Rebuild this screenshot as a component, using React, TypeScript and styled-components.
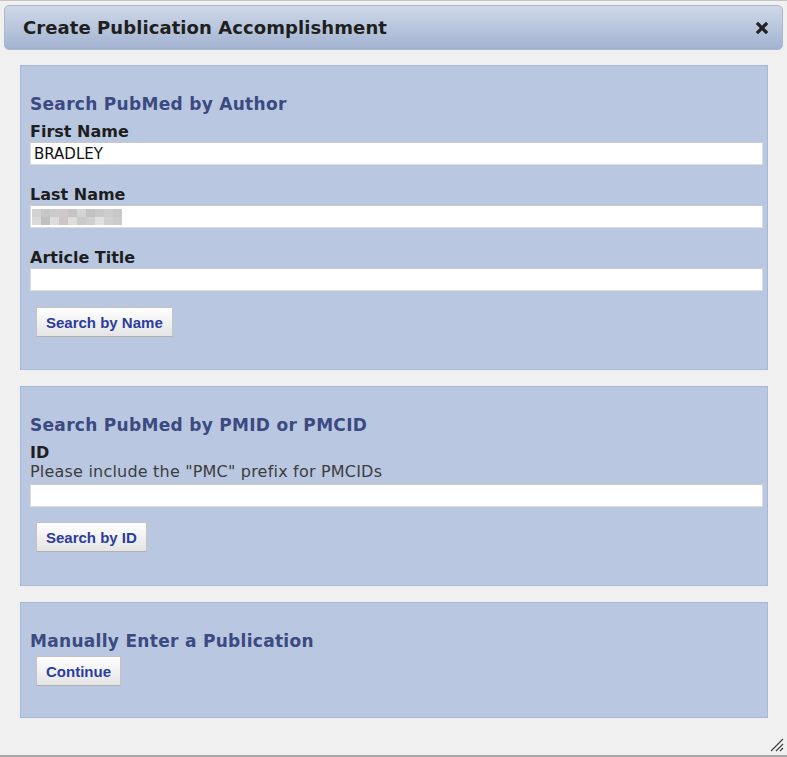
import React from "react";
import styled, { createGlobalStyle } from "styled-components";

const Global = createGlobalStyle`
  html, body { margin: 0; padding: 0; background: #f0f0f0; }
  * { box-sizing: border-box; }
`;

const Dialog = styled.div`
  position: relative;
  width: 787px;
  height: 757px;
  background: #f0f0f0;
  border-top: 1px solid #c4c4c4;
  border-bottom: 2px solid #a8a8a8;
  padding: 4px 4px 0 4px;
  font-family: "DejaVu Sans", Verdana, sans-serif;
  display: flex;
  flex-direction: column;
`;

const TitleBar = styled.div`
  height: 45px;
  border: 1px solid #aab7cd;
  border-radius: 5px;
  background: linear-gradient(#cfd8e8, #a2b3d1);
  display: flex;
  align-items: center;
  justify-content: space-between;
  padding: 0 13px 0 18px;
`;

const Title = styled.h1`
  margin: 0;
  font-size: 18px;
  font-weight: bold;
  color: #1f1f1f;
  letter-spacing: 0.08px;
`;

const Close = styled.button`
  border: none;
  background: none;
  padding: 0;
  width: 14px;
  height: 14px;
  display: flex;
  align-items: center;
  justify-content: center;
  cursor: pointer;
`;

const Body = styled.div`
  display: flex;
  flex-direction: column;
  gap: 16px;
  padding: 15px 15px 0 16px;
`;

const Section = styled.section<{ $h: number }>`
  height: ${(p) => p.$h}px;
  background: #b9c7e1;
  border: 1px solid #a6b8d8;
  padding: 28px 4px 0 9px;
  display: flex;
  flex-direction: column;
`;

const Heading = styled.h2`
  margin: 0 0 9px 0;
  font-size: 17px;
  line-height: 20px;
  font-weight: bold;
  color: #3b4a80;
  letter-spacing: 0.3px;
`;

const Label = styled.label`
  display: block;
  font-size: 16px;
  line-height: 18px;
  font-weight: bold;
  color: #1e1e1e;
  margin-bottom: 1px;
`;

const Help = styled.div`
  font-size: 16px;
  line-height: 18px;
  color: #3d3d3d;
  letter-spacing: 0.2px;
  margin-bottom: 3px;
`;

const FieldWrap = styled.div<{ $mb?: number }>`
  position: relative;
  margin-bottom: ${(p) => p.$mb ?? 21}px;
`;

const Input = styled.input`
  display: block;
  width: 100%;
  height: 23px;
  border: 1px solid #dedede;
  border-top-color: #c9c9c9;
  background: #fff;
  padding: 0 3px;
  font-family: "DejaVu Sans", Verdana, sans-serif;
  font-size: 15px;
  color: #111;
  outline: none;
`;

const Mosaic = styled.div`
  position: absolute;
  left: 2px;
  top: 4px;
  display: grid;
  grid-template-columns: repeat(10, 9px);
  grid-auto-rows: 8px;
  pointer-events: none;
`;

const Tile = styled.span<{ $c: string }>`
  background: ${(p) => p.$c};
`;

const Button = styled.button<{ $mt: number }>`
  align-self: flex-start;
  margin: ${(p) => p.$mt}px 0 0 6px;
  height: 30px;
  padding: 0 9px;
  border: 1px solid #c3c3c3;
  border-bottom-color: #b0b0b0;
  background: linear-gradient(#ffffff, #e4e4e4);
  font-family: "Liberation Sans", Arial, sans-serif;
  font-weight: bold;
  font-size: 15px;
  color: #2b3c9c;
  cursor: pointer;
`;

const Grip = styled.div`
  position: absolute;
  right: 3px;
  bottom: 4px;
  width: 14px;
  height: 14px;
`;

const mosaicColors = [
  "#d2d2d2", "#c6c6c6", "#cbcbcb", "#cfc8c8", "#c4c4c4", "#d4d4d4", "#c2c2c2", "#c9c9c9", "#cdcdcd", "#c8c8c8",
  "#dadada", "#c0c0c0", "#dcdcdc", "#c8c8c8", "#dedcd8", "#cacaca", "#d0d0d0", "#e0e0e0", "#d0d0d0", "#cccccc",
];

export default function App() {
  return (
    <>
      <Global />
      <Dialog>
        <TitleBar>
          <Title>Create Publication Accomplishment</Title>
          <Close aria-label="close">
            <svg width="12" height="12" viewBox="0 0 12 12">
              <path d="M2 2 L10 10 M10 2 L2 10" stroke="#222" strokeWidth="3.2" strokeLinecap="square" />
            </svg>
          </Close>
        </TitleBar>
        <Body>
          <Section $h={305}>
            <Heading>Search PubMed by Author</Heading>
            <Label>First Name</Label>
            <FieldWrap>
              <Input defaultValue="BRADLEY" />
            </FieldWrap>
            <Label>Last Name</Label>
            <FieldWrap>
              <Input defaultValue="" />
              <Mosaic>
                {mosaicColors.map((c, i) => (
                  <Tile key={i} $c={c} />
                ))}
              </Mosaic>
            </FieldWrap>
            <Label>Article Title</Label>
            <FieldWrap $mb={0}>
              <Input />
            </FieldWrap>
            <Button $mt={16}>Search by Name</Button>
          </Section>
          <Section $h={200}>
            <Heading>Search PubMed by PMID or PMCID</Heading>
            <Label>ID</Label>
            <Help>Please include the "PMC" prefix for PMCIDs</Help>
            <FieldWrap $mb={0}>
              <Input />
            </FieldWrap>
            <Button $mt={15}>Search by ID</Button>
          </Section>
          <Section $h={116}>
            <Heading>Manually Enter a Publication</Heading>
            <Button $mt={-4}>Continue</Button>
          </Section>
        </Body>
        <Grip>
          <svg width="14" height="14" viewBox="0 0 14 14">
            <path d="M1 13 L13 1 M6 13 L13 6 M10 13 L13 10" stroke="#444" strokeWidth="1.2" />
          </svg>
        </Grip>
      </Dialog>
    </>
  );
}
